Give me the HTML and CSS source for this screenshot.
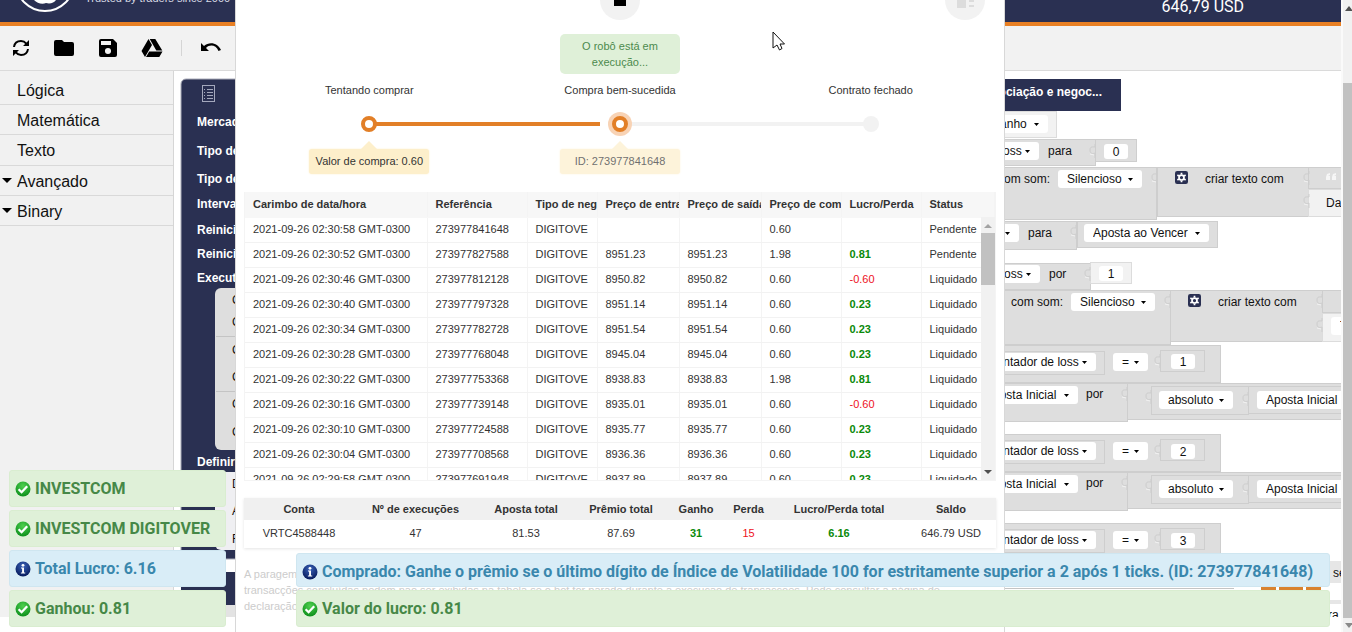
FILE: index.html
```html
<!DOCTYPE html>
<html lang="pt">
<head>
<meta charset="utf-8">
<title>Binary Bot</title>
<link rel="stylesheet" href="styles.css">
</head>
<body>
<svg class="defs" width="0" height="0" aria-hidden="true">
  <defs>
    <radialGradient id="green" cx="50%" cy="30%" r="70%"><stop offset="0" stop-color="#4fd04f"/><stop offset="1" stop-color="#0d8f1c"/></radialGradient>
    <radialGradient id="blue" cx="50%" cy="30%" r="70%"><stop offset="0" stop-color="#3a62b8"/><stop offset="1" stop-color="#061a5c"/></radialGradient>
    <symbol id="ok" viewBox="0 0 16 16"><circle cx="8" cy="8" r="7.5" fill="url(#green)"/><path d="M3.6 8.2l3 3 5.600-6" fill="none" stroke="#fff" stroke-width="2.300"/></symbol>
    <symbol id="info" viewBox="0 0 16 16"><circle cx="8" cy="8" r="7.500" fill="url(#blue)"/><circle cx="8" cy="4.300" r="1.400" fill="#fff"/><path d="M6 6.600h3v5h1.200v1H5.900v-1h1.200V7.600H6z" fill="#fff"/></symbol>
    <symbol id="gear" viewBox="0 0 12 12"><rect width="12" height="12" rx="2" fill="#2a3052"/><circle cx="6" cy="6" r="2.300" fill="none" stroke="#fff" stroke-width="1.600"/><path d="M6 1.600v1.600M6 8.800v1.600M2.200 3.800l1.400.8M8.400 7.400l1.400.8M2.200 8.200l1.400-.8M8.400 4.600l1.400-.8" stroke="#fff" stroke-width="1.600"/></symbol>
    <symbol id="tab" viewBox="0 0 8 16"><path d="M7 1v3C5 4 2 3 2 7s3 4 5 3v5" fill="none" stroke="#cdcdcd"/><path d="M2 11l4 1" stroke="#f2f2f2"/></symbol>
  </defs>
</svg>
<div class="page">
  <div class="app">
    <header class="header">
      <svg class="logo" width="60" height="22" viewBox="0 0 60 22"><circle cx="30" cy="-18" r="29" fill="none" stroke="#fff" stroke-width="2"/><path d="M19 0h22c-2 3-6 4-10 3-4 2-9 0-12-3z" fill="#fff"/></svg>
      <p class="tagline">Trusted by traders since 2000</p>
      <p class="balance">646,79 USD</p>
    </header>
    <nav class="toolbar">
      <button aria-label="Reiniciar"><svg width="20" height="20" viewBox="0 0 20 20" fill="none" stroke="#000" stroke-width="2"><path d="M3 9c.5-4 3.500-6 7-6 2.500 0 4 1 5.500 2.800M17 11c-.5 4-3.500 6-7 6-2.500 0-4-1-5.500-2.800"/><path d="M18 2v6h-6zM2 18v-6h6z" fill="#000" stroke="none"/></svg></button>
      <button aria-label="Abrir"><svg width="24" height="20" viewBox="0 0 24 20"><path d="M4 2h6l2 2h8a2 2 0 0 1 2 2v10a2 2 0 0 1-2 2H4a2 2 0 0 1-2-2V4a2 2 0 0 1 2-2z"/></svg></button>
      <button aria-label="Salvar"><svg width="20" height="20" viewBox="0 0 20 20"><path fill-rule="evenodd" d="M3 1h12l4 4v12a2 2 0 0 1-2 2H3a2 2 0 0 1-2-2V3a2 2 0 0 1 2-2zm0 2v4h10V3zm7 7a3 3 0 1 0 0 6.100 3 3 0 0 0 0-6.100z"/></svg></button>
      <button aria-label="Google Drive"><svg width="22" height="20" viewBox="0 0 22 20"><path d="M7.500 1L.5 13l3.500 6 7-12zM8.700 1h5.600l7 11.500h-6zM8.200 13.500H21.500l-3.200 5.500H5z"/></svg></button>
      <span class="divider"></span>
      <button aria-label="Desfazer"><svg width="22" height="20" viewBox="0 0 22 20"><path d="M1 5v8h8L6 10c4-4 10-3 12.500 3l2.500-1C18 5 9.500 3 4 8z"/></svg></button>
    </nav>
    <div class="body">
      <aside class="sidebar">
        <a href="#">Lógica</a>
        <a href="#">Matemática</a>
        <a href="#">Texto</a>
        <a href="#" class="more">Avançado</a>
        <a href="#" class="more">Binary</a>
      </aside>
      <main class="workspace">
        <svg class="canvas" width="100%" height="100%">
          <g transform="translate(-174 -71)">
            <!-- start block -->
            <path d="M181 559V84a5 5 0 0 1 5-5H300V559z" fill="#2a3052" stroke="#a9abb8"/>
            <g fill="none" stroke="#a4a8bd"><rect x="202.500" y="85.500" width="12" height="16"/><path d="M207 89.500h6M207 92.500h6M207 95.500h6M207 98.500h6M204 89.500h1M204 92.500h1M204 95.500h1M204 98.500h1"/></g>
            <g class="strong">
              <text x="197" y="126">Mercado:</text><text x="197" y="155">Tipo de negociação:</text><text x="197" y="183">Tipo de contrato:</text><text x="197" y="208">Intervalo de velas:</text><text x="197" y="234">Reiniciar comprar</text><text x="197" y="258">Reiniciar último</text><text x="197" y="282">Executar uma vez</text><text x="197" y="466">Definir opções</text>
            </g>
            <path d="M221 288h79v162h-79a6 6 0 0 1-6-6V294a6 6 0 0 1 6-6z" fill="#dedede"/>
            <path d="M216 336.500h20M216 391.500h20" stroke="#c4c4c4"/>
            <g class="label"><text x="232" y="304">C</text><text x="232" y="326">C</text><text x="232" y="354">C</text><text x="232" y="381">C</text><text x="232" y="408">C</text><text x="232" y="436">C</text></g>
            <path d="M221 472h79v78h-79a6 6 0 0 1-6-6v-66a6 6 0 0 1 6-6z" fill="#efeff2"/>
            <g class="label"><text x="232" y="488">D</text><text x="232" y="515">A</text><text x="232" y="543">F</text></g>
            <path d="M181 572h119v33H181z" fill="#2a3052"/><path d="M215 605h30v12h-30z" fill="#e3e3e3"/>

            <!-- result block -->
            <path d="M900 79h221v32H900z" fill="#2a3052"/>
            <text class="strong" x="1102" y="96" text-anchor="end">negociação e negoc...</text>
            <rect class="pale" x="900.500" y="111.500" width="156" height="26"/>
            <g class="block">
              <rect x="900.500" y="139.500" width="195" height="26"/><rect x="1095.500" y="139.500" width="41" height="22"/>
              <rect x="900.500" y="167.500" width="256" height="52"/><rect x="1157.500" y="167.500" width="151" height="49"/><rect x="1308.500" y="167.500" width="60" height="21"/>
              <rect x="900.500" y="221.500" width="176" height="28"/><rect x="1077.500" y="221.500" width="140" height="26"/>
              <rect x="900.500" y="263.500" width="190" height="26"/>
              <rect x="900.500" y="290.500" width="270" height="54"/><rect x="1170.500" y="290.500" width="152" height="51"/><rect x="1322.500" y="290.500" width="50" height="22"/>
            </g>
            <g class="pale"><rect x="1308.500" y="189.500" width="60" height="27"/><rect x="1090.500" y="262.500" width="41" height="21"/><rect x="1322.500" y="313.500" width="50" height="28"/></g>
            <g id="cond" class="block">
              <rect x="900.500" y="345.500" width="320" height="37"/><rect x="900.500" y="351.500" width="204" height="23"/><rect x="1160.500" y="350.500" width="44" height="21"/>
            </g>
            <g id="add" class="block">
              <rect x="900.500" y="383.500" width="227" height="38"/><rect x="1127.500" y="383.500" width="230" height="36"/><rect x="1151.500" y="386.500" width="97" height="28"/><rect x="1248.500" y="386.500" width="110" height="27"/>
            </g>
            <use href="#cond" y="89"/><use href="#add" y="89"/><use href="#cond" y="178"/>
            <path d="M1004 588.500h230" stroke="#c4c4c4"/><path d="M1261 588.500h15m3 0h24m3 0h15" stroke="#d9822f" stroke-width="3"/>
            <path d="M1330 561h12v22h-12zM1330 600h12v4h-12z" fill="#e6e6e6"/>
            <use href="#tab" x="1088" y="143" width="8" height="16"/><use href="#tab" x="1150" y="170" width="8" height="16"/><use href="#tab" x="1302" y="170" width="8" height="16"/><use href="#tab" x="1302" y="193" width="8" height="16"/><use href="#tab" x="1069" y="224" width="8" height="16"/><use href="#tab" x="1083" y="266" width="8" height="16"/><use href="#tab" x="1163" y="293" width="8" height="16"/><use href="#tab" x="1315" y="293" width="8" height="16"/><use href="#tab" x="1315" y="317" width="8" height="16"/>
            <use href="#tab" x="1153" y="353" width="8" height="16"/><use href="#tab" x="1120" y="386" width="8" height="16"/><use href="#tab" x="1144" y="389" width="8" height="16"/><use href="#tab" x="1241" y="391" width="8" height="16"/>
            <use href="#tab" x="1153" y="442" width="8" height="16"/><use href="#tab" x="1120" y="475" width="8" height="16"/><use href="#tab" x="1144" y="478" width="8" height="16"/><use href="#tab" x="1241" y="480" width="8" height="16"/><use href="#tab" x="1153" y="531" width="8" height="16"/>
            <use href="#gear" x="1175" y="171" width="13" height="13"/><use href="#gear" x="1188" y="294" width="13" height="13"/>
            <path d="M1330 173l-3 1-1 3v3h4v-4h-2l2-1zM1336 173l-3 1-1 3v3h4v-4h-2l2-1z" fill="#f6f6f6"/>
            <g class="label">
              <text x="1048" y="155">para</text><text x="1050" y="183" text-anchor="end">com som:</text><text x="1205" y="183">criar texto com</text><text x="1326" y="207">Da</text>
              <text x="1028" y="237">para</text><text x="1049" y="278">por</text><text x="1011" y="306">com som:</text><text x="1218" y="306">criar texto com</text>
              <text x="1086" y="398">por</text><text x="1086" y="487">por</text><text x="1333" y="577">se</text><text x="1328" y="619">ra</text>
            </g>
            <foreignObject x="915" y="115" width="133" height="19"><select aria-label="Variável"><option>Contador de ganho</option></select></foreignObject>
            <foreignObject x="922" y="142" width="117" height="19"><select aria-label="Variável"><option>Contador de loss</option></select></foreignObject>
            <foreignObject x="1058" y="170" width="84" height="19"><select aria-label="Som"><option>Silencioso</option></select></foreignObject>
            <foreignObject x="919" y="224" width="100" height="19"><select aria-label="Variável"><option>Aposta Inicial</option></select></foreignObject>
            <foreignObject x="1084" y="224" width="125" height="19"><select aria-label="Variável"><option>Aposta ao Vencer</option></select></foreignObject>
            <foreignObject x="923" y="265" width="117" height="19"><select aria-label="Variável"><option>Contador de loss</option></select></foreignObject>
            <foreignObject x="1071" y="293" width="84" height="19"><select aria-label="Som"><option>Silencioso</option></select></foreignObject>
            <foreignObject x="1331" y="317" width="60" height="19"><select aria-label="Variável"><option>Total</option></select></foreignObject>
            <foreignObject x="979" y="353" width="117" height="19"><select aria-label="Variável"><option>Contador de loss</option></select></foreignObject>
            <foreignObject x="1113" y="353" width="35" height="19"><select aria-label="Operador"><option>=</option></select></foreignObject>
            <foreignObject x="976" y="386" width="102" height="19"><select aria-label="Variável"><option>Aposta Inicial</option></select></foreignObject>
            <foreignObject x="1159" y="391" width="74" height="19"><select aria-label="Função"><option>absoluto</option></select></foreignObject>
            <foreignObject x="1257" y="391" width="102" height="19"><select aria-label="Variável"><option>Aposta Inicial</option></select></foreignObject>
            <foreignObject x="979" y="442" width="117" height="19"><select aria-label="Variável"><option>Contador de loss</option></select></foreignObject>
            <foreignObject x="1113" y="442" width="35" height="19"><select aria-label="Operador"><option>=</option></select></foreignObject>
            <foreignObject x="976" y="475" width="102" height="19"><select aria-label="Variável"><option>Aposta Inicial</option></select></foreignObject>
            <foreignObject x="1159" y="480" width="74" height="19"><select aria-label="Função"><option>absoluto</option></select></foreignObject>
            <foreignObject x="1257" y="480" width="102" height="19"><select aria-label="Variável"><option>Aposta Inicial</option></select></foreignObject>
            <foreignObject x="979" y="531" width="117" height="19"><select aria-label="Variável"><option>Contador de loss</option></select></foreignObject>
            <foreignObject x="1113" y="531" width="35" height="19"><select aria-label="Operador"><option>=</option></select></foreignObject>
            <foreignObject x="1104" y="144" width="24" height="16"><input aria-label="Número" value="0"></foreignObject>
            <foreignObject x="1099" y="266" width="24" height="16"><input aria-label="Número" value="1"></foreignObject>
            <foreignObject x="1171" y="354" width="24" height="16"><input aria-label="Número" value="1"></foreignObject>
            <foreignObject x="1171" y="444" width="24" height="16"><input aria-label="Número" value="2"></foreignObject>
            <foreignObject x="1171" y="533" width="24" height="16"><input aria-label="Número" value="3"></foreignObject>
          </g>
        </svg>
      </main>
    </div>
  </div>
  <div class="scrollbar">
    <svg width="10" height="10" viewBox="0 0 10 10"><path d="M2 8l4-5 4 5z" fill="#505050"/></svg>
    <span class="scroll-thumb"></span>
    <svg width="10" height="10" viewBox="0 0 10 10"><path d="M2 2h8L6 7z" fill="#8a8a8a"/></svg>
  </div>

  <section class="panel">
    <div class="controls">
      <span></span>
      <button class="round" aria-label="Parar"><svg width="40" height="40"><path d="M14 14h12v12H14z"/></svg></button>
      <button class="round" aria-label="Limpar"><svg width="40" height="40"><path d="M12 16h9v12h-9zM24 20h5v2h-5zM24 25h5v2h-5z" fill="#dcdcdc"/></svg></button>
    </div>
    <p class="message">O robô está em execução...</p>
    <ol class="steps">
      <li class="done"><span>Tentando comprar</span><i class="dot"></i><b class="tip">Valor de compra: 0.60</b></li>
      <li class="active"><span>Compra bem-sucedida</span><i class="dot"></i><b class="tip">ID: 273977841648</b></li>
      <li><span>Contrato fechado</span><i class="dot"></i></li>
    </ol>
    <div class="history">
      <table>
        <colgroup><col class="c-time"><col class="c-ref"><col class="c-type"><col class="c-price"><col class="c-price"><col class="c-buy"><col class="c-buy"><col></colgroup>
        <thead><tr><th>Carimbo de data/hora</th><th>Referência</th><th>Tipo de negociação</th><th>Preço de entrada</th><th>Preço de saída</th><th>Preço de compra</th><th>Lucro/Perda</th><th>Status</th></tr></thead>
        <tbody>
          <tr><td>2021-09-26 02:30:58 GMT-0300</td><td>273977841648</td><td>DIGITOVE</td><td></td><td></td><td>0.60</td><td></td><td>Pendente</td></tr>
          <tr><td>2021-09-26 02:30:52 GMT-0300</td><td>273977827588</td><td>DIGITOVE</td><td>8951.23</td><td>8951.23</td><td>1.98</td><td class="win">0.81</td><td>Pendente</td></tr>
          <tr><td>2021-09-26 02:30:46 GMT-0300</td><td>273977812128</td><td>DIGITOVE</td><td>8950.82</td><td>8950.82</td><td>0.60</td><td class="loss">-0.60</td><td>Liquidado</td></tr>
          <tr><td>2021-09-26 02:30:40 GMT-0300</td><td>273977797328</td><td>DIGITOVE</td><td>8951.14</td><td>8951.14</td><td>0.60</td><td class="win">0.23</td><td>Liquidado</td></tr>
          <tr><td>2021-09-26 02:30:34 GMT-0300</td><td>273977782728</td><td>DIGITOVE</td><td>8951.54</td><td>8951.54</td><td>0.60</td><td class="win">0.23</td><td>Liquidado</td></tr>
          <tr><td>2021-09-26 02:30:28 GMT-0300</td><td>273977768048</td><td>DIGITOVE</td><td>8945.04</td><td>8945.04</td><td>0.60</td><td class="win">0.23</td><td>Liquidado</td></tr>
          <tr><td>2021-09-26 02:30:22 GMT-0300</td><td>273977753368</td><td>DIGITOVE</td><td>8938.83</td><td>8938.83</td><td>1.98</td><td class="win">0.81</td><td>Liquidado</td></tr>
          <tr><td>2021-09-26 02:30:16 GMT-0300</td><td>273977739148</td><td>DIGITOVE</td><td>8935.01</td><td>8935.01</td><td>0.60</td><td class="loss">-0.60</td><td>Liquidado</td></tr>
          <tr><td>2021-09-26 02:30:10 GMT-0300</td><td>273977724588</td><td>DIGITOVE</td><td>8935.77</td><td>8935.77</td><td>0.60</td><td class="win">0.23</td><td>Liquidado</td></tr>
          <tr><td>2021-09-26 02:30:04 GMT-0300</td><td>273977708568</td><td>DIGITOVE</td><td>8936.36</td><td>8936.36</td><td>0.60</td><td class="win">0.23</td><td>Liquidado</td></tr>
          <tr><td>2021-09-26 02:29:58 GMT-0300</td><td>273977691948</td><td>DIGITOVE</td><td>8937.89</td><td>8937.89</td><td>0.60</td><td class="win">0.23</td><td>Liquidado</td></tr>
        </tbody>
      </table>
      <div class="inner-scroll">
        <svg width="14" height="16"><path d="M3 11l4-4 4 4z" fill="#a3a3a3"/></svg>
        <span></span>
        <svg width="14" height="16"><path d="M3 6h8l-4 4z" fill="#505050"/></svg>
      </div>
    </div>
    <table class="summary">
      <colgroup><col class="s1"><col class="s2"><col class="s3"><col class="s4"><col class="s5"><col class="s6"><col class="s7"><col></colgroup>
      <thead><tr><th>Conta</th><th>Nº de execuções</th><th>Aposta total</th><th>Prêmio total</th><th>Ganho</th><th>Perda</th><th>Lucro/Perda total</th><th>Saldo</th></tr></thead>
      <tbody><tr><td>VRTC4588448</td><td>47</td><td>81.53</td><td>87.69</td><td class="win">31</td><td class="loss">15</td><td class="win">6.16</td><td>646.79 USD</td></tr></tbody>
    </table>
    <p class="note">A paragem do robô impedirá a realização de novas negociações. Quaisquer negociações em curso serão concluídas pelo sistema. Algumas transacções concluídas podem não ser exibidas na tabela se o bot for parado durante a execução de transacções. Pode consultar a página de declaração.</p>
  </section>

  <div class="notices left">
    <p class="notice ok"><svg width="16" height="16"><use href="#ok"/></svg>INVESTCOM</p>
    <p class="notice ok"><svg width="16" height="16"><use href="#ok"/></svg>INVESTCOM DIGITOVER</p>
    <p class="notice info"><svg width="16" height="16"><use href="#info"/></svg>Total Lucro: 6.16</p>
    <p class="notice ok"><svg width="16" height="16"><use href="#ok"/></svg>Ganhou: 0.81</p>
  </div>
  <div class="notices right">
    <p class="notice info entering"><svg width="16" height="16"><use href="#info"/></svg>Comprado: Ganhe o prêmio se o último dígito de Índice de Volatilidade 100 for estritamente superior a 2 após 1 ticks. (ID: 273977841648)</p>
    <p class="notice ok"><svg width="16" height="16"><use href="#ok"/></svg>Valor do lucro: 0.81</p>
  </div>
  <svg class="pointer" width="14" height="21" viewBox="0 0 14 21"><path d="M1 1v16l4-3 2.500 5 2.500-1.500L8 13h4.500z" fill="#fff" stroke="#111"/></svg>
</div>
</body>
</html>
```
FILE: styles.css
```css
* { box-sizing: border-box; }
body { margin: 0; font-family: "Liberation Sans", Arial, sans-serif; font-size: 11px; color: #333; background: #fff; overflow: hidden; }
p, ol { margin: 0; padding: 0; }
button { border: 0; padding: 0; background: none; display: flex; }
.defs { position: absolute; }
.page { position: relative; display: flex; height: 100vh; overflow: hidden; }
.app { flex: 1; min-width: 0; display: flex; flex-direction: column; padding-bottom: 15px; }
.header { display: flex; flex: none; height: 26px; padding: 0 97px 0 15px; background: #2a3052; border-bottom: 4px solid #e98024; color: #fff; overflow: hidden; }
.tagline { flex: 1; margin-top: -9px; padding-left: 10px; font-size: 11px; line-height: 14px; color: #d9dbe6; }
.balance { font: 16px/22px Roboto, sans-serif; margin-top: -4px; }
.toolbar { display: flex; flex: none; align-items: center; height: 45px; background: #f2f2f2; border-bottom: 1px solid #dadada; }
.toolbar button { width: 44px; justify-content: center; }
.toolbar button:first-child { width: 42px; }
.toolbar .divider { width: 1px; height: 16px; margin: 0 7px; background: #d5d5d5; }
.body { flex: 1; min-height: 0; display: flex; }
.sidebar { width: 174px; flex: none; background: #f1f1f1; border-right: 1px solid #d6d6d6; padding-top: 4px; }
.sidebar a { display: flex; align-items: center; position: relative; height: 30px; padding: 2px 0 0 17px; border-bottom: 1px solid #d9d9d9; font-size: 16px; color: #111; text-decoration: none; }
.sidebar a:nth-child(3) { height: 31px; }
.more::before { content: ""; position: absolute; left: 2px; top: 12px; border: 5px solid transparent; border-top-color: #000; border-bottom: 0; }
.workspace { flex: 1; min-width: 0; overflow: hidden; }
.canvas { display: block; font-size: 12px; }
.strong { font-weight: bold; fill: #fff; }
.label { fill: #111; }
.block rect, rect.block { fill: #dedede; stroke: #cecece; }
.pale rect, rect.pale { fill: #f2f2f2; stroke: #dcdcdc; }
.canvas select { display: block; width: 100%; height: 18px; padding: 0 9px; border: 0; border-radius: 3px; appearance: none; color: #111; font: 12px "Liberation Sans", Arial, sans-serif; background: #fff url("data:image/svg+xml,%3Csvg xmlns='http://www.w3.org/2000/svg' width='5' height='3'%3E%3Cpath d='M0 0h5L2.500 3z'/%3E%3C/svg%3E") no-repeat right 9px center; }
.canvas input { display: block; width: 100%; height: 15px; padding: 0; border: 0; border-radius: 3px; text-align: center; color: #111; background: #fff; font: 12px "Liberation Sans", Arial, sans-serif; }
.scrollbar { width: 11px; flex: none; display: flex; flex-direction: column; justify-content: space-between; background: #f1f1f1; padding: 3px 0 1px; border-left: 2px solid #fafafa; }
.scroll-thumb { flex: 1; margin: 70px 0 3px; background: #c1c1c1; }

.panel { position: absolute; top: 0; bottom: 0; left: 235px; right: 347px; padding: 0 8px; overflow: hidden; background: #fff; border: 1px solid #d8d8d8; border-width: 0 1px; }
.controls { display: grid; grid-template-columns: 1fr 40px 1fr; margin-top: -20px; padding: 0 11px; height: 40px; }
.round { width: 40px; height: 40px; border-radius: 50%; background: #f2f2f2; }
.round:last-child { justify-self: end; }
.message { width: 120px; margin: 14px auto 0; padding: 4px 8px; border-radius: 5px; background: #dff0d8; color: #4c8a4d; line-height: 16px; text-align: center; }
.steps { display: grid; grid-template-columns: repeat(3, 1fr); list-style: none; margin-top: 8px; height: 110px; }
.steps li { position: relative; display: flex; flex-direction: column; align-items: center; line-height: 16px; }
.dot { position: relative; width: 16px; height: 16px; margin: 18px 0 17px; border-radius: 50%; background: #f2f2f2; }
.done .dot, .active .dot { background: #fff; border: 4px solid #e27f27; }
.active .dot { box-shadow: 0 0 0 4px #f8d3b5; }
.done::before, .active::before { content: ""; position: absolute; left: 50%; top: 40px; width: 100%; height: 4px; background: #f2f2f2; }
.done::before { background: linear-gradient(90deg, #e27f27 92%, #fff 92%); }
.tip { position: relative; width: 120px; padding: 4px 0; border-radius: 3px; background: #fdefcb; text-align: center; font-weight: normal; line-height: 17px; box-shadow: 0 0 2px #fdefcb; }
.tip::before { content: ""; position: absolute; left: 52px; top: -8px; border: 8px solid transparent; border-top: 0; border-bottom-color: #fdefcb; }
.active .tip { opacity: .7; }
table { width: 100%; table-layout: fixed; border-collapse: collapse; }
.history { position: relative; height: 289px; overflow: hidden; border: 1px solid #f4f4f4; border-top: 0; }
.history th, .history td { height: 25px; padding: 0 0 1px 8px; border-right: 1px solid #f4f4f4; border-bottom: 1px solid #f2f2f2; text-align: left; white-space: nowrap; overflow: hidden; }
.history th { background: #f7f7f7; border-bottom-color: #f7f7f7; }
.history td { padding-bottom: 2px; }
.c-time { width: 182px; }
.c-ref { width: 100px; }
.c-type { width: 70px; }
.c-price { width: 82px; }
.c-buy { width: 80px; }
td.win { color: #0a8a0a; font-weight: bold; }
td.loss { color: #ee1122; }
.inner-scroll { position: absolute; top: 25px; right: 0; bottom: 0; width: 14px; display: flex; flex-direction: column; justify-content: space-between; background: #f1f1f1; }
.inner-scroll span { height: 52px; margin-bottom: auto; background: #c1c1c1; }
.summary { margin-top: 17px; box-shadow: 0 1px 3px #e4e4e4; }
.summary th { height: 22px; padding: 0; background: #f0f0f0; }
.summary td { height: 28px; padding: 0 0 2px; text-align: center; }
.s1 { width: 110px; }
.s2 { width: 123px; }
.s3 { width: 98px; }
.s4 { width: 92px; }
.s5 { width: 58px; }
.s6 { width: 47px; }
.s7 { width: 134px; }
.note { margin-top: 18px; padding-right: 40px; line-height: 16px; color: #ccc; }

.notices { position: absolute; bottom: 5px; display: flex; flex-direction: column; gap: 3px; }
.notices.left { left: 9px; width: 217px; }
.notices.right { left: 296px; right: 22px; }
.notice { display: flex; align-items: center; gap: 4px; height: 37px; padding: 0 5px; border: 1px solid; border-radius: 3px; font: 700 16px/20px Roboto, sans-serif; white-space: nowrap; }
.notice svg { flex: none; }
.notice.ok { color: #468847; background: #dff0d8; border-color: #d9edd0; }
.notice.info { color: #3a87ad; background: #d9edf7; border-color: #cfe6f0; }
.notice.entering { height: 34px; padding-top: 3px; }
.pointer { position: absolute; left: 772px; top: 31px; }
```
